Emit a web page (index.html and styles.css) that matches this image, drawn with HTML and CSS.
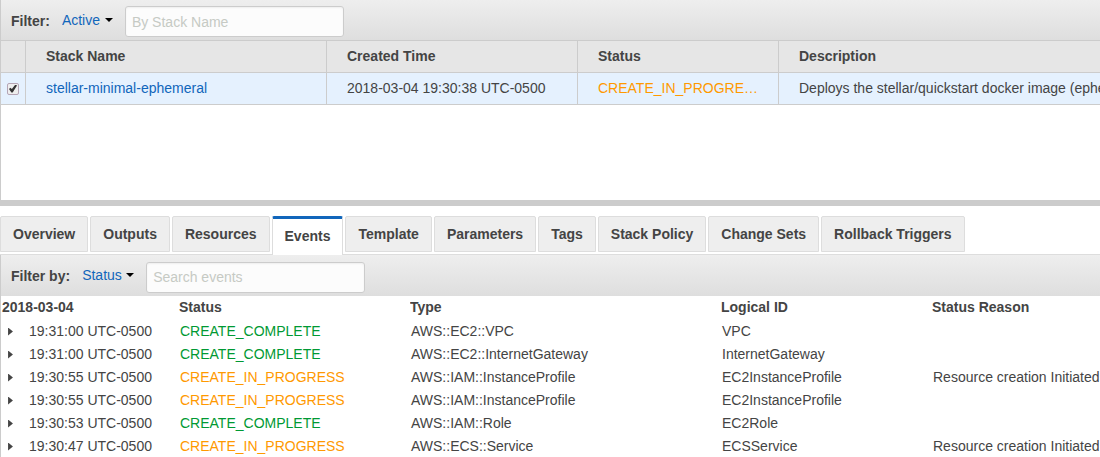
FILE: index.html
```html
<!DOCTYPE html>
<html lang="en">
<head>
<meta charset="utf-8">
<title>Stacks</title>
<link rel="stylesheet" href="styles.css">
</head>
<body>
<main class="console">
  <section class="stacks">
    <div class="toolbar">
      <label class="toolbar-label" for="stack-filter">Filter:</label>
      <span class="dropdown"><select id="stack-filter"><option>Active</option></select></span>
      <input class="search" type="text" placeholder="By Stack Name" aria-label="By Stack Name">
    </div>
    <table class="stack-table">
      <colgroup><col class="col-check"><col class="col-name"><col class="col-time"><col class="col-status"><col></colgroup>
      <thead>
        <tr><th></th><th>Stack Name</th><th>Created Time</th><th>Status</th><th>Description</th></tr>
      </thead>
      <tbody>
        <tr>
          <td class="check-cell"><input class="check" type="checkbox" checked aria-label="Select stellar-minimal-ephemeral"></td>
          <td><a class="link" href="#">stellar-minimal-ephemeral</a></td>
          <td>2018-03-04 19:30:38 UTC-0500</td>
          <td class="progress truncate">CREATE_IN_PROGRESS</td>
          <td>Deploys the stellar/quickstart docker image (ephemeral)</td>
        </tr>
      </tbody>
    </table>
  </section>
  <div class="splitter"></div>
  <nav class="tabs" role="tablist">
    <button class="tab" role="tab">Overview</button>
    <button class="tab" role="tab">Outputs</button>
    <button class="tab" role="tab">Resources</button>
    <button class="tab tab-active" role="tab" aria-selected="true">Events</button>
    <button class="tab" role="tab">Template</button>
    <button class="tab" role="tab">Parameters</button>
    <button class="tab" role="tab">Tags</button>
    <button class="tab" role="tab">Stack Policy</button>
    <button class="tab" role="tab">Change Sets</button>
    <button class="tab" role="tab">Rollback Triggers</button>
  </nav>
  <section class="events">
    <div class="toolbar">
      <label class="toolbar-label" for="event-filter">Filter by:</label>
      <span class="dropdown"><select id="event-filter"><option>Status</option></select></span>
      <input class="search" type="text" placeholder="Search events" aria-label="Search events">
    </div>
    <table class="event-table">
      <colgroup><col class="ev-time"><col class="ev-status"><col class="ev-type"><col class="ev-id"><col></colgroup>
      <thead>
        <tr><th>2018-03-04</th><th>Status</th><th>Type</th><th>Logical ID</th><th>Status Reason</th></tr>
      </thead>
      <tbody>
        <tr><td><button class="expand" aria-label="Expand"></button>19:31:00 UTC-0500</td><td class="complete">CREATE_COMPLETE</td><td>AWS::EC2::VPC</td><td>VPC</td><td></td></tr>
        <tr><td><button class="expand" aria-label="Expand"></button>19:31:00 UTC-0500</td><td class="complete">CREATE_COMPLETE</td><td>AWS::EC2::InternetGateway</td><td>InternetGateway</td><td></td></tr>
        <tr><td><button class="expand" aria-label="Expand"></button>19:30:55 UTC-0500</td><td class="progress">CREATE_IN_PROGRESS</td><td>AWS::IAM::InstanceProfile</td><td>EC2InstanceProfile</td><td>Resource creation Initiated</td></tr>
        <tr><td><button class="expand" aria-label="Expand"></button>19:30:55 UTC-0500</td><td class="progress">CREATE_IN_PROGRESS</td><td>AWS::IAM::InstanceProfile</td><td>EC2InstanceProfile</td><td></td></tr>
        <tr><td><button class="expand" aria-label="Expand"></button>19:30:53 UTC-0500</td><td class="complete">CREATE_COMPLETE</td><td>AWS::IAM::Role</td><td>EC2Role</td><td></td></tr>
        <tr><td><button class="expand" aria-label="Expand"></button>19:30:47 UTC-0500</td><td class="progress">CREATE_IN_PROGRESS</td><td>AWS::ECS::Service</td><td>ECSService</td><td>Resource creation Initiated</td></tr>
      </tbody>
    </table>
  </section>
</main>
</body>
</html>
```

FILE: styles.css
```css
* { box-sizing: border-box; }

body {
  margin: 0;
  background: #fff;
  color: #444;
  font: 14px/20px "Liberation Sans", Arial, sans-serif;
}

button, input, select { font: inherit; color: inherit; }

table { width: 100%; border-collapse: separate; border-spacing: 0; table-layout: fixed; }

th, td { padding: 0 0 2px; text-align: left; white-space: nowrap; overflow: hidden; }

.stacks { min-height: 200px; border-left: 1px solid #ccc; }

.toolbar {
  display: flex;
  align-items: center;
  height: 40px;
  padding: 3px 10px 0;
  background: linear-gradient(#eee, #dedede);
}

.events .toolbar { height: 41px; }

.toolbar-label { font-weight: bold; margin-right: 12px; padding-bottom: 2px; }

.dropdown {
  display: flex;
  align-items: center;
  gap: 4px;
  margin-right: 12px;
  padding-bottom: 4px;
  color: #1166bb;
}

.dropdown::after {
  content: "";
  border: 4px solid transparent;
  border-top-color: #000;
  border-bottom: 0;
}

.dropdown select {
  appearance: none;
  border: 0;
  padding: 0;
  background: none;
}

.search {
  width: 219px;
  height: 31px;
  padding: 0 6px;
  border: 1px solid #ccc;
  border-radius: 3px;
  background: #fcfcfc;
  box-shadow: inset 0 1px 2px #eee;
}

.search::placeholder { color: #c6cac4; }

.col-check { width: 25px; }
.col-name { width: 301px; }
.col-time { width: 251px; }
.col-status { width: 201px; }

.stack-table th, .stack-table td {
  height: 32px;
  padding-left: 20px;
  border-right: 1px solid #ccc;
  border-bottom: 1px solid #ccc;
}

.stack-table th { height: 33px; background: #e6e6e6; border-top: 1px solid #ccc; }
.stack-table td { background: #e5f1fe; }
.stack-table th:last-child, .stack-table td:last-child { border-right: 0; }
.stack-table .check-cell { padding: 0 0 0 6px; }

.truncate { text-overflow: ellipsis; }
.stack-table .truncate { padding-right: 20px; }

.link { color: #1166bb; text-decoration: none; }
.progress { color: #ff9900; }
.complete { color: #009933; }

.check {
  appearance: none;
  display: grid;
  place-items: center;
  width: 12px;
  height: 12px;
  margin: 0;
  border: 1px solid #b5a5b5;
  border-radius: 2px;
  background: #eee;
}

.check:checked::before {
  content: "";
  width: 8px;
  height: 8px;
  background: #333;
  clip-path: polygon(0 55%, 16% 40%, 36% 56%, 80% 0, 100% 14%, 46% 100%, 30% 100%);
}

.splitter { height: 6px; background: #ccc; }

.tabs {
  display: flex;
  align-items: flex-start;
  gap: 2px;
  height: 49px;
  padding-top: 10px;
  border-bottom: 1px solid #ddd;
}

.tab {
  height: 36px;
  padding: 0 12px;
  border: 1px solid #ddd;
  border-radius: 2px 2px 0 0;
  background: #eee;
  font-weight: bold;
  white-space: nowrap;
}

.tab-active {
  height: 39px;
  padding-bottom: 2px;
  border-top: 3px solid #1166bb;
  border-bottom: 0;
  background: #fff;
}

.events { border-left: 1px solid #ccc; }

.ev-time { width: 178px; }
.ev-status { width: 231px; }
.ev-type { width: 311px; }
.ev-id { width: 211px; }

.event-table th { height: 24px; }
.event-table th:first-child { padding-left: 1px; }
.event-table td { height: 23px; padding-left: 1px; }

.expand {
  width: 7px;
  height: 8px;
  margin: 0 15px 0 5px;
  padding: 0;
  border: 0;
  background: #444;
  clip-path: polygon(15% 0, 85% 50%, 15% 100%);
}
```
